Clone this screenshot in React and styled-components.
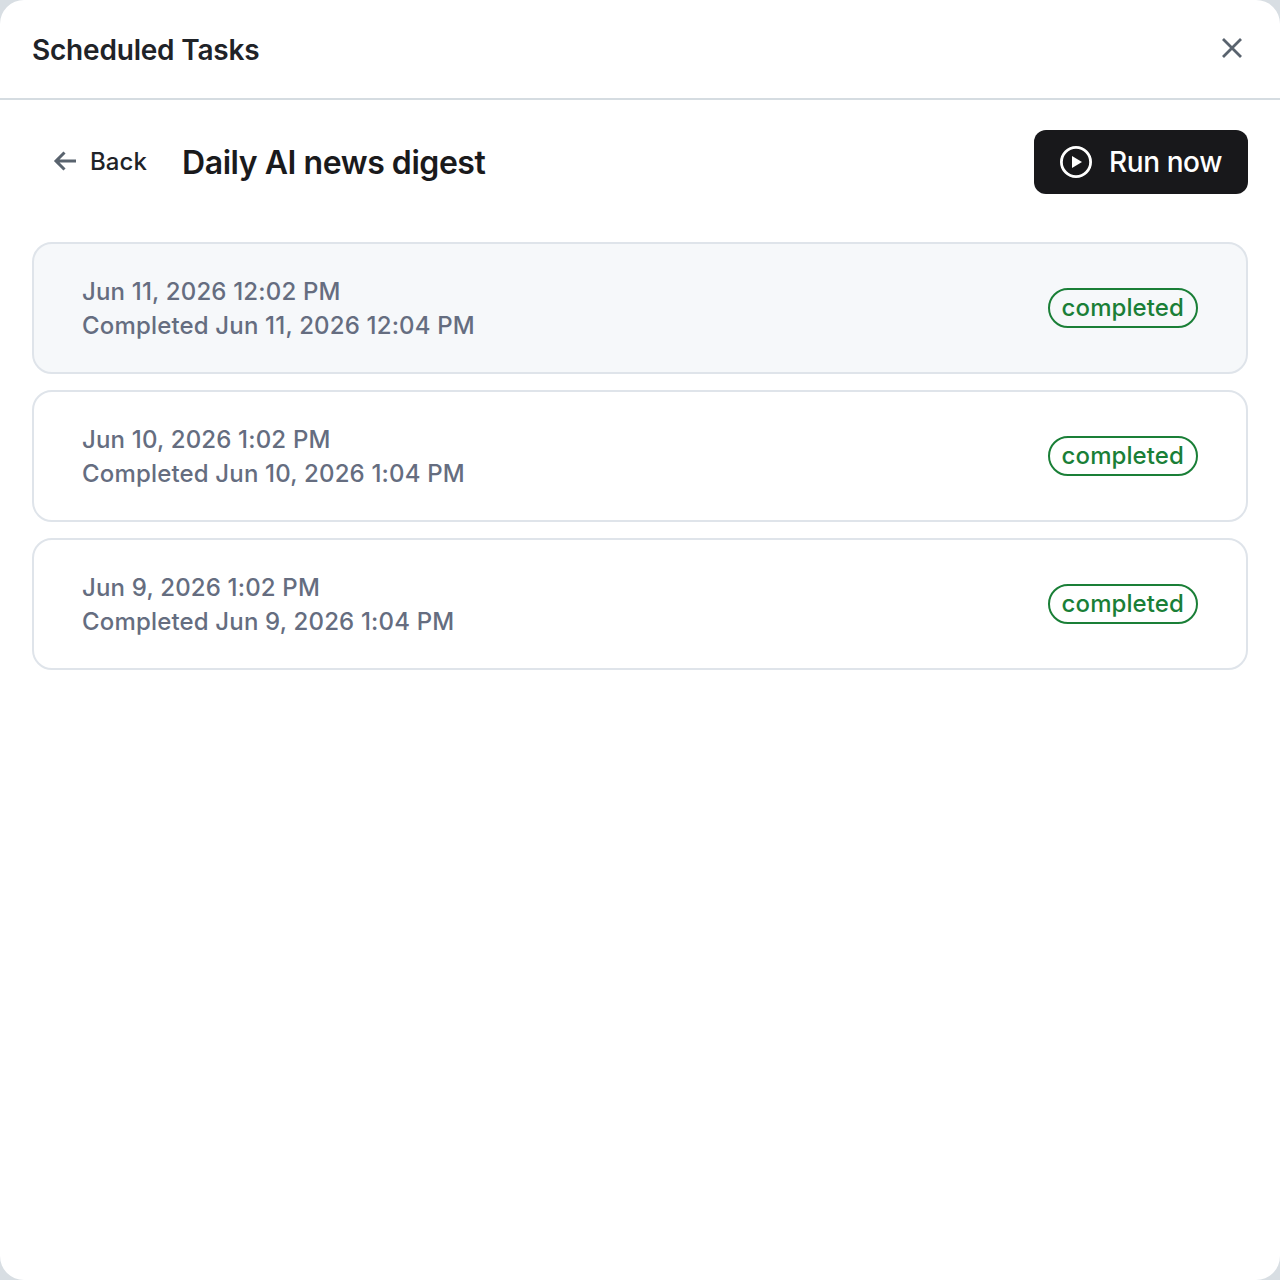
import React from "react";
import styled, { createGlobalStyle } from "styled-components";

const GlobalStyle = createGlobalStyle`
  html, body {
    margin: 0;
    padding: 0;
    background: #d8dee3;
  }
  * {
    box-sizing: border-box;
  }
`;

const Modal = styled.div`
  width: 1280px;
  height: 1280px;
  background: #ffffff;
  border-radius: 24px;
  overflow: hidden;
  font-family: Inter, "Liberation Sans", sans-serif;
`;

const Header = styled.header`
  display: flex;
  align-items: center;
  justify-content: space-between;
  height: 100px;
  padding: 0 32px;
  border-bottom: 2px solid #d5dce1;
`;

const Title = styled.h1`
  margin: 2px 0 0;
  font-size: 28px;
  font-weight: 600;
  letter-spacing: -0.2px;
  color: #1f2328;
`;

const CloseButton = styled.button`
  display: flex;
  padding: 4px;
  margin-bottom: 2px;
  border: none;
  background: none;
  color: #59636e;
`;

const Body = styled.main`
  padding: 30px 32px;
`;

const Toolbar = styled.div`
  display: flex;
  align-items: center;
  gap: 15px;
  margin-bottom: 48px;
`;

const BackButton = styled.button`
  display: flex;
  align-items: center;
  gap: 12px;
  height: 64px;
  padding: 0 20px 2px;
  border: none;
  background: none;
  font-family: inherit;
  font-size: 24px;
  font-weight: 500;
  letter-spacing: 0.1px;
  color: #1f2328;
`;

const BackIcon = styled.svg`
  color: #59636e;
`;

const TaskName = styled.h2`
  flex: 1;
  margin: 0;
  font-size: 32px;
  font-weight: 600;
  letter-spacing: -0.45px;
  color: #1a1a1c;
`;

const RunButton = styled.button`
  display: flex;
  align-items: center;
  gap: 17px;
  height: 64px;
  padding: 0 26px;
  border: none;
  border-radius: 12px;
  background: #18181b;
  font-family: inherit;
  font-size: 28px;
  font-weight: 500;
  letter-spacing: -0.4px;
  color: #ffffff;
`;

const RunList = styled.div`
  display: flex;
  flex-direction: column;
  gap: 16px;
`;

const RunCard = styled.div`
  display: flex;
  align-items: center;
  justify-content: space-between;
  height: 132px;
  padding: 0 48px;
  border: 2px solid #dfe4ea;
  border-radius: 20px;
  background: ${(p) => (p.$selected ? "#f6f8fa" : "#ffffff")};
`;

const RunTimes = styled.div`
  padding-top: 2px;
  font-size: 24px;
  font-weight: 500;
  letter-spacing: 0.17px;
  line-height: 34px;
  color: #656d80;
`;

const StatusBadge = styled.span`
  display: flex;
  align-items: center;
  height: 40px;
  padding: 0 12px 2px;
  border: 2px solid #1a7f37;
  border-radius: 20px;
  font-size: 24px;
  font-weight: 500;
  letter-spacing: 0.1px;
  color: #1a7f37;
`;

const runs = [
  { started: "Jun 11, 2026 12:02 PM", completed: "Completed Jun 11, 2026 12:04 PM", selected: true },
  { started: "Jun 10, 2026 1:02 PM", completed: "Completed Jun 10, 2026 1:04 PM" },
  { started: "Jun 9, 2026 1:02 PM", completed: "Completed Jun 9, 2026 1:04 PM" },
];

const App = () => {
  return (
    <Modal>
      <GlobalStyle />
      <Header>
        <Title>Scheduled Tasks</Title>
        <CloseButton aria-label="Close">
          <svg width="24" height="24" viewBox="0 0 24 24" fill="none" stroke="currentColor" strokeWidth="2.8">
            <path d="M3 3 21 21M21 3 3 21" />
          </svg>
        </CloseButton>
      </Header>
      <Body>
        <Toolbar>
          <BackButton>
            <BackIcon width="26" height="24" viewBox="0 0 26 24" fill="none" stroke="currentColor" strokeWidth="3">
              <path d="M24 12H4M12.5 3.5 4 12l8.5 8.5" />
            </BackIcon>
            Back
          </BackButton>
          <TaskName>Daily AI news digest</TaskName>
          <RunButton>
            <svg width="32" height="32" viewBox="0 0 32 32" fill="none">
              <circle cx="16" cy="16" r="14.6" stroke="currentColor" strokeWidth="2.8" />
              <path d="M12 10 22 16l-10 6z" fill="currentColor" />
            </svg>
            Run now
          </RunButton>
        </Toolbar>
        <RunList>
          {runs.map((run) => (
            <RunCard key={run.started} $selected={run.selected}>
              <RunTimes>
                <div>{run.started}</div>
                <div>{run.completed}</div>
              </RunTimes>
              <StatusBadge>completed</StatusBadge>
            </RunCard>
          ))}
        </RunList>
      </Body>
    </Modal>
  );
};

export default App;
